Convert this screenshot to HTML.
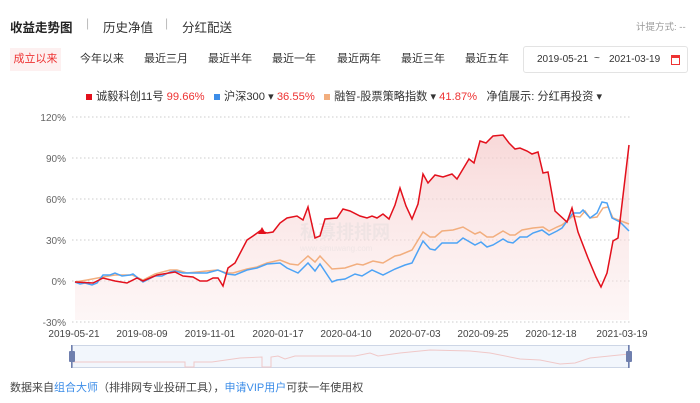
<!DOCTYPE html>
<html><head><meta charset="utf-8"><style>
*{margin:0;padding:0;box-sizing:border-box}
body{width:700px;height:403px;background:#fff;font-family:"Liberation Sans","Noto Sans CJK SC",sans-serif;position:relative;overflow:hidden;color:#333}
.a{position:absolute;white-space:nowrap}
.t{top:48px;font-size:11px;line-height:22px;color:#333}
</style></head><body>
<div class="a" style="left:10px;top:17px;font-size:12.5px;font-weight:bold;color:#222">收益走势图</div>
<div class="a" style="left:86px;top:16px;font-size:12px;color:#bbb">|</div>
<div class="a" style="left:103px;top:17px;font-size:12.5px;color:#333">历史净值</div>
<div class="a" style="left:165px;top:16px;font-size:12px;color:#bbb">|</div>
<div class="a" style="left:182px;top:17px;font-size:12.5px;color:#333">分红配送</div>
<div class="a" style="left:636px;top:19px;font-size:9.5px;color:#999">计提方式: --</div>
<div class="a t" style="left:10px;width:51px;height:23px;background:#fdf0f0;color:#e33;text-align:center">成立以来</div>
<div class="a t" style="left:80px">今年以来</div>
<div class="a t" style="left:144px">最近三月</div>
<div class="a t" style="left:208px">最近半年</div>
<div class="a t" style="left:272px">最近一年</div>
<div class="a t" style="left:337px">最近两年</div>
<div class="a t" style="left:401px">最近三年</div>
<div class="a t" style="left:465px">最近五年</div>
<div class="a" style="left:523px;top:46px;width:165px;height:27px;border:1px solid #e3e3e3;border-radius:3px"></div>
<div class="a" style="left:537px;top:54px;font-size:10px;color:#333">2019-05-21</div>
<div class="a" style="left:594px;top:53px;font-size:10px;color:#333">~</div>
<div class="a" style="left:609px;top:54px;font-size:10px;color:#333">2021-03-19</div>
<div class="a" style="left:671px;top:55px;width:9px;height:10px;border:1.5px solid #e33;border-top-width:3px"></div>
<div class="a" style="left:86px;top:88px;font-size:11.2px;color:#333"><span style="display:inline-block;width:6px;height:6px;background:#e3101c;margin-right:4px;vertical-align:middle"></span>诚毅科创11号 <span style="color:#e33">99.66%</span>&nbsp;&nbsp;&nbsp;<span style="display:inline-block;width:6px;height:6px;background:#3c8de8;margin-right:4px;vertical-align:middle"></span>沪深300 ▾ <span style="color:#e33">36.55%</span>&nbsp;&nbsp;&nbsp;<span style="display:inline-block;width:6px;height:6px;background:#f2ae7e;margin-right:4px;vertical-align:middle"></span>融智-股票策略指数 ▾ <span style="color:#e33">41.87%</span>&nbsp;&nbsp;&nbsp;净值展示: 分红再投资 ▾</div>
<svg class="a" style="left:0;top:0" width="700" height="403">
<defs><linearGradient id="g" x1="0" y1="0" x2="0" y2="1"><stop offset="0" stop-color="#f5c8c8" stop-opacity=".7"/><stop offset="1" stop-color="#fbe9e9" stop-opacity=".4"/></linearGradient></defs>
<g stroke="#ccc" stroke-dasharray="1.5 2.5" stroke-width="1">
<line x1="72" y1="117" x2="630" y2="117"/><line x1="72" y1="158" x2="630" y2="158"/><line x1="72" y1="199" x2="630" y2="199"/><line x1="72" y1="240" x2="630" y2="240"/><line x1="72" y1="281" x2="630" y2="281"/><line x1="72" y1="322" x2="630" y2="322"/>
</g>
<g font-size="10" fill="#666" text-anchor="end"><text x="66" y="121">120%</text><text x="66" y="162">90%</text><text x="66" y="203">60%</text><text x="66" y="244">30%</text><text x="66" y="285">0%</text><text x="66" y="326">-30%</text></g>
<g font-size="10" fill="#444" text-anchor="middle"><text x="74" y="337">2019-05-21</text><text x="142" y="337">2019-08-09</text><text x="210" y="337">2019-11-01</text><text x="278" y="337">2020-01-17</text><text x="346" y="337">2020-04-10</text><text x="415" y="337">2020-07-03</text><text x="483" y="337">2020-09-25</text><text x="551" y="337">2020-12-18</text><text x="622" y="337">2021-03-19</text></g>
<polygon fill="url(#g)" points="75,282 93,283 103,278 115,281 127,283 137,278 143,281 157,275 175,272 183,276 193,277 200,281 207,281 213,278 218,278 223,286 228,268 235,263 247,240 253,236 260,231 267,233 273,232 280,223 287,218 297,216 303,220 308,207 315,238 320,236 325,219 337,218 343,209 350,211 360,216 367,218 372,216 377,218 383,214 389,219 395,205 400,188 406,206 412,219 418,204 423,174 428,183 435,175 443,177 452,174 457,179 463,169 469,159 474,163 480,141 486,143 493,136 503,135 509,143 515,149 520,148 527,151 532,154 538,152 543,173 548,172 555,211 567,222 572,208 578,232 588,258 596,277 601,287 607,273 613,241 618,238 629,145 629,320 75,320"/>
<text x="300" y="238" font-size="18" font-weight="bold" fill="#e8e0e0" opacity=".6">私募排排网</text>
<text x="300" y="251" font-size="8" fill="#e8e0e0" opacity=".6">www.simuwang.com</text>
<polyline fill="none" stroke="#f2ae7e" stroke-width="1.5" points="75,282 87,280 103,277 115,275 132,275 143,280 155,274 170,270 177,270 187,273 217,270 227,273 233,273 247,269 257,267 267,263 280,260 290,264 298,265 308,256 315,262 320,256 332,269 345,268 357,264 363,265 373,261 383,263 395,256 400,255 412,250 423,232 430,237 435,237 442,231 453,230 463,227 475,234 480,232 487,237 493,237 503,231 510,235 515,235 522,230 533,228 543,227 549,231 557,227 562,225 573,216 580,217 585,211 590,218 597,217 603,208 608,207 613,218 629,224"/>
<polyline fill="none" stroke="#4da3f5" stroke-width="1.5" points="75,282 80,284 85,283 92,285 97,283 103,275 110,275 115,273 122,276 130,275 133,274 143,282 155,276 162,276 170,272 175,271 183,273 193,273 207,273 218,270 227,274 235,275 247,270 257,268 267,264 280,263 287,268 298,273 308,263 315,271 320,264 332,282 337,280 345,279 355,274 362,276 372,270 383,275 395,269 405,265 412,263 423,241 430,249 435,250 442,243 457,243 463,238 475,245 481,242 487,247 493,245 503,239 508,242 513,243 520,237 527,237 533,233 542,230 549,235 557,231 562,228 573,213 580,213 583,210 590,218 597,213 602,202 607,203 612,218 620,222 629,231"/>
<polyline fill="none" stroke="#e3101c" stroke-width="1.5" points="75,282 93,283 103,278 115,281 127,283 137,278 143,281 157,275 175,272 183,276 193,277 200,281 207,281 213,278 218,278 223,286 228,268 235,263 247,240 253,236 260,231 267,233 273,232 280,223 287,218 297,216 303,220 308,207 315,238 320,236 325,219 337,218 343,209 350,211 360,216 367,218 372,216 377,218 383,214 389,219 395,205 400,188 406,206 412,219 418,204 423,174 428,183 435,175 443,177 452,174 457,179 463,169 469,159 474,163 480,141 486,143 493,136 503,135 509,143 515,149 520,148 527,151 532,154 538,152 543,173 548,172 555,211 567,222 572,208 578,232 588,258 596,277 601,287 607,273 613,241 618,238 629,145"/>
<polygon fill="#e3101c" points="258,234 262,227 266,234"/>
<rect x="72.5" y="345.5" width="557" height="22" fill="#f2f6fc" stroke="#cdd6e6"/>
<polyline fill="none" stroke="#f0c8c8" stroke-width="1" points="73,362 185,362 185,367 194,367 194,362 212,362 240,358 262,357 262,367 271,367 271,357 278,356 285,359 295,356 330,356 355,356 370,353 378,356 400,353 430,350 470,351 490,353 520,359 540,360 560,364 575,363 590,358 629,354"/>
<rect x="71" y="345" width="1.5" height="23" fill="#6f7fae"/><rect x="69" y="351" width="6" height="11" rx="1" fill="#6f7fae"/>
<rect x="628" y="345" width="1.5" height="23" fill="#6f7fae"/><rect x="626" y="351" width="6" height="11" rx="1" fill="#6f7fae"/>
</svg>
<div class="a" style="left:10px;top:379px;font-size:11px;color:#444">数据来自<span style="color:#3c8de8">组合大师</span>（排排网专业投研工具），<span style="color:#3c8de8">申请VIP用户</span>可获一年使用权</div>
</body></html>
